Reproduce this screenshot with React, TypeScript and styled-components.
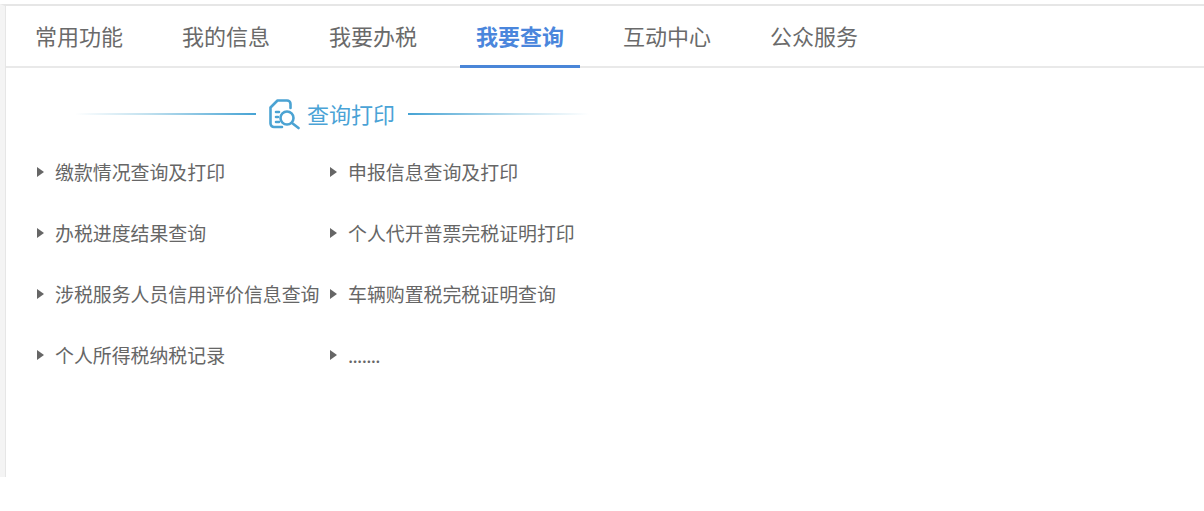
import React from "react";
import styled, { createGlobalStyle } from "styled-components";

const Global = createGlobalStyle`
  html, body { margin: 0; padding: 0; background: #fff; }
  body { font-family: "Noto Sans CJK SC", "Liberation Sans", sans-serif; }
`;

const Page = styled.div`
  width: 1204px;
  height: 511px;
  box-sizing: border-box;
  padding-top: 4px;
  overflow: hidden;
`;

const Panel = styled.section`
  height: 473px;
  box-sizing: border-box;
  border-top: 2px solid #e6e6e6;
  border-left: 5px solid #f4f4f4;
  padding-left: 1px;
  box-shadow: inset 1px 0 0 #e6e6e6;
`;

const Tabs = styled.nav`
  display: flex;
  height: 62px;
  box-sizing: border-box;
  padding-left: 13px;
  gap: 27px;
  border-bottom: 2px solid #e9e9e9;
`;

const Tab = styled.a<{ $active?: boolean }>`
  width: 120px;
  height: 62px;
  box-sizing: border-box;
  text-align: center;
  font-size: 22px;
  line-height: 59px;
  white-space: nowrap;
  color: ${(p) => (p.$active ? "#4a86dc" : "#6a6a6a")};
  font-weight: ${(p) => (p.$active ? 700 : 400)};
  border-bottom: ${(p) => (p.$active ? "3px solid #4a86d8" : "none")};
`;

const SectionTitle = styled.header`
  display: flex;
  align-items: center;
  width: 514px;
  height: 32px;
  margin: 30px 0 0 69px;
`;

const Rule = styled.span<{ $flip?: boolean }>`
  flex: 1;
  height: 2px;
  background: linear-gradient(
    ${(p) => (p.$flip ? "to left" : "to right")},
    rgba(78, 168, 208, 0) 0%,
    rgba(78, 168, 208, 0.35) 40%,
    #46a3d4 100%
  );
`;

const TitleIcon = styled.svg`
  width: 32px;
  height: 32px;
  margin: 0 7px 0 12px;
  flex: none;
`;

const TitleText = styled.h2`
  margin: 0 13px 2px 0;
  width: 88px;
  font-size: 22px;
  font-weight: 400;
  line-height: 30px;
  color: #4aa3d6;
  white-space: nowrap;
`;

const LinkGrid = styled.ul`
  display: grid;
  grid-template-columns: 293px 293px;
  grid-auto-rows: 61px;
  list-style: none;
  margin: 11px 0 0 31px;
  padding: 0;
`;

const LinkItem = styled.li`
  display: flex;
  align-items: center;
  font-size: 18.9px;
  color: #666;
  white-space: nowrap;
`;

const Arrow = styled.i`
  width: 0;
  height: 0;
  margin-right: 11px;
  flex: none;
  border-style: solid;
  border-width: 5px 0 5px 7px;
  border-color: transparent transparent transparent #666;
`;

const Dots = styled.span`
  letter-spacing: -0.7px;
`;

const tabs = ["常用功能", "我的信息", "我要办税", "我要查询", "互动中心", "公众服务"];
const links = [
  "缴款情况查询及打印",
  "申报信息查询及打印",
  "办税进度结果查询",
  "个人代开普票完税证明打印",
  "涉税服务人员信用评价信息查询",
  "车辆购置税完税证明查询",
  "个人所得税纳税记录",
];

export default function App() {
  return (
    <>
      <Global />
      <Page>
        <Panel>
          <Tabs>
            {tabs.map((t) => (
              <Tab key={t} $active={t === "我要查询"}>
                {t}
              </Tab>
            ))}
          </Tabs>
          <SectionTitle>
            <Rule />
            <TitleIcon viewBox="0 0 32 32" fill="none" stroke="#4ba3d3" strokeWidth="2.6" strokeLinecap="round" strokeLinejoin="round">
              <path d="M14 29H6a3.5 3.5 0 0 1-3.5-3.5V9.5L9.5 2.5H19a3.5 3.5 0 0 1 3.5 3.5V10" />
              <path d="M8 14h3M8 19h2M8 24h3" />
              <circle cx="19" cy="20" r="6.5" />
              <path d="M24 25L30.5 30" />
            </TitleIcon>
            <TitleText>查询打印</TitleText>
            <Rule $flip />
          </SectionTitle>
          <LinkGrid>
            {links.map((l) => (
              <LinkItem key={l}>
                <Arrow />
                {l}
              </LinkItem>
            ))}
            <LinkItem>
              <Arrow />
              <Dots>.......</Dots>
            </LinkItem>
          </LinkGrid>
        </Panel>
      </Page>
    </>
  );
}
